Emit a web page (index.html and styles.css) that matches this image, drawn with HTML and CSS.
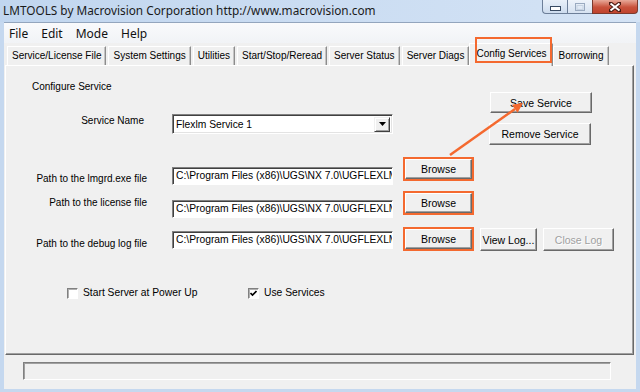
FILE: index.html
```html
<!DOCTYPE html>
<html lang="en">
<head>
    <meta charset="UTF-8">
    <title>LMTOOLS</title>
    <link rel="stylesheet" href="styles.css">
</head>
<body>
    <div class="window">
        <div class="titlebar">
            <span class="title">LMTOOLS by Macrovision Corporation http://www.macrovision.com</span>
            <div class="caption-btns">
                <div class="cap cap-min">
                    <svg width="11" height="5" viewBox="0 0 11 5"><rect x="0.5" y="0.5" width="10" height="4" fill="#fff" stroke="#394b63"/></svg>
                </div>
                <div class="cap cap-max">
                    <svg width="10" height="8" viewBox="0 0 10 8"><rect x="0.5" y="0.5" width="9" height="7" fill="none" stroke="#9aaac0"/><rect x="2" y="2.5" width="6" height="4" fill="none" stroke="#c7d3e2"/></svg>
                </div>
                <div class="cap cap-close">
                    <svg width="12" height="10" viewBox="0 0 12 10"><path d="M1 1 L11 9 M11 1 L1 9" stroke="#4a1a12" stroke-width="4" stroke-linecap="square"/><path d="M1.5 1.5 L10.5 8.5 M10.5 1.5 L1.5 8.5" stroke="#fff" stroke-width="2"/></svg>
                </div>
            </div>
        </div>

        <div class="client">
            <div class="menubar">
                <span>File</span>
                <span>Edit</span>
                <span>Mode</span>
                <span>Help</span>
            </div>

            <div class="tabs">
                <div class="tab">Service/License File</div>
                <div class="tab">System Settings</div>
                <div class="tab">Utilities</div>
                <div class="tab">Start/Stop/Reread</div>
                <div class="tab">Server Status</div>
                <div class="tab">Server Diags</div>
                <div class="tab active">Config Services</div>
                <div class="tab">Borrowing</div>
            </div>

            <div class="panel">
                <div class="top">
                    <div class="top-left">
                        <div class="heading">Configure Service</div>
                        <div class="service-row">
                            <div class="label">Service Name</div>
                            <div class="combo">
                                <span>Flexlm Service 1</span>
                                <div class="drop">
                                    <svg width="7" height="4" viewBox="0 0 7 4"><path d="M0 0 H7 L3.5 4 Z" fill="#000"/></svg>
                                </div>
                            </div>
                        </div>
                    </div>
                    <div class="top-right">
                        <div class="btn btn-wide">Save Service</div>
                        <div class="btn btn-wide btn-remove">Remove Service</div>
                    </div>
                </div>

                <div class="prow row1">
                    <div class="plabel">Path to the lmgrd.exe file</div>
                    <div class="field">C:\Program Files (x86)\UGS\NX 7.0\UGFLEXLM</div>
                    <div class="btn browse marked">Browse</div>
                </div>
                <div class="prow row2">
                    <div class="plabel">Path to the license file</div>
                    <div class="field">C:\Program Files (x86)\UGS\NX 7.0\UGFLEXLM</div>
                    <div class="btn browse marked">Browse</div>
                </div>
                <div class="prow row3">
                    <div class="plabel">Path to the debug log file</div>
                    <div class="field">C:\Program Files (x86)\UGS\NX 7.0\UGFLEXLM</div>
                    <div class="btn browse marked">Browse</div>
                    <div class="btn view-log">View Log...</div>
                    <div class="btn close-log disabled">Close Log</div>
                </div>

                <div class="checks">
                    <div class="check-item">
                        <span class="checkbox"></span>
                        <span>Start Server at Power Up</span>
                    </div>
                    <div class="check-item">
                        <span class="checkbox">
                            <svg width="7" height="7" viewBox="0 0 7 7"><path d="M0.5 3 L2.5 5 L6.5 1" fill="none" stroke="#000" stroke-width="1.6"/></svg>
                        </span>
                        <span>Use Services</span>
                    </div>
                </div>
            </div>

            <div class="status"></div>
        </div>

        <svg class="arrow" width="640" height="392" viewBox="0 0 640 392">
            <line x1="450" y1="155" x2="515" y2="109" stroke="#f4692f" stroke-width="2.5"/>
            <polygon points="523,103 517.6,112.8 511.9,104.8" fill="#f4692f"/>
        </svg>
    </div>
</body>
</html>
```

FILE: styles.css
```css
body {
    margin: 0;
    width: 640px;
    height: 392px;
    overflow: hidden;
    background: #c5d8ef;
    font-family: 'Liberation Sans', Arial, sans-serif;
    font-size: 10px;
    color: #000;
}

.window {
    position: relative;
    height: 392px;
    display: flex;
    flex-direction: column;
}

.titlebar {
    height: 22px;
    display: flex;
    justify-content: space-between;
    align-items: flex-start;
    background: linear-gradient(to right, #c1d6ef, #d4e3f5);
}

.title {
    font-family: 'Noto Sans', sans-serif;
    font-size: 11.8px;
    line-height: 20px;
    padding-left: 3px;
    color: #1a1a1a;
}

.caption-btns {
    display: flex;
    margin-right: 2px;
    height: 14px;
}

.cap {
    box-sizing: border-box;
    height: 14px;
    display: flex;
    align-items: center;
    justify-content: center;
    border: 1px solid #6d7f99;
    border-top: none;
}

.cap-min {
    width: 25px;
    border-right: none;
    border-radius: 0 0 0 4px;
    background: linear-gradient(#e9f0f9, #cddcee);
    padding-top: 4px;
}

.cap-max {
    width: 25px;
    border-right: none;
    background: linear-gradient(#eef3fa, #d6e2f1);
}

.cap-close {
    width: 46px;
    border-radius: 0 0 4px 0;
    border-color: #7b3a2e;
    background: linear-gradient(#e8a999, #c9523c 55%, #c0432e);
}

.client {
    flex: 1;
    margin: 0 4px 3px 4px;
    background: #f0f0f0;
    border-top: 1px solid #93a5bd;
    display: flex;
    flex-direction: column;
}

.menubar {
    height: 20px;
    display: flex;
    align-items: center;
    gap: 13px;
    padding-left: 5px;
    background: linear-gradient(#f9fafc, #f1f3f6);
    font-family: 'Noto Sans', sans-serif;
    font-size: 12px;
    color: #111;
}

.tabs {
    height: 22px;
    box-sizing: border-box;
    display: flex;
    align-items: flex-end;
    padding-left: 3px;
}

.tab {
    box-sizing: border-box;
    height: 19px;
    line-height: 17px;
    padding: 0 4px;
    margin-right: 2px;
    white-space: nowrap;
    border-top: 1px solid #fff;
    border-left: 1px solid #fff;
    border-right: 1px solid #8d8d8d;
    box-shadow: inset -1px 0 #c4c4c4;
}

.tab.active {
    position: relative;
    z-index: 1;
    height: 23px;
    line-height: 19px;
    margin: 0 0 -1px -2px;
    padding: 0 6px;
    background: #f0f0f0;
}

.tab.active::after {
    content: "";
    position: absolute;
    left: 5px;
    right: 0;
    top: -7px;
    bottom: 3px;
    border: 2px solid #f4692f;
}

.panel {
    box-sizing: border-box;
    height: 290px;
    margin: 0 2px 0 1px;
    border: 1px solid;
    border-color: #fff #696969 #696969 #fff;
    box-shadow: inset -1px -1px #a0a0a0;
}

.top {
    display: flex;
}

.heading {
    margin: 15px 0 0 26px;
    line-height: 12px;
}

.service-row {
    display: flex;
    margin-top: 21px;
}

.label {
    width: 138px;
    text-align: right;
    line-height: 12px;
    margin-top: 1px;
}

.combo {
    box-sizing: border-box;
    width: 221px;
    height: 20px;
    margin-left: 28px;
    display: flex;
    align-items: center;
    justify-content: space-between;
    background: #fff;
    border: 1px solid;
    border-color: #808080 #fff #fff #808080;
    box-shadow: inset 1px 1px #404040, inset -1px -1px #e3e3e3;
    padding: 2px 2px 2px 3px;
    font-size: 10.3px;
}

.drop {
    box-sizing: border-box;
    width: 16px;
    height: 15px;
    display: flex;
    align-items: center;
    justify-content: center;
    background: #f0f0f0;
    border: 1px solid;
    border-color: #f0f0f0 #404040 #404040 #f0f0f0;
    box-shadow: inset 1px 1px #fff, inset -1px -1px #a0a0a0;
}

.top-right {
    margin: 26px 41px 0 auto;
    display: flex;
    flex-direction: column;
}

.btn {
    box-sizing: border-box;
    height: 20px;
    display: flex;
    align-items: center;
    justify-content: center;
    background: #f0f0f0;
    border: 1px solid;
    border-color: #fff #696969 #696969 #fff;
    box-shadow: inset -1px -1px #a0a0a0;
    white-space: nowrap;
}

.btn-wide {
    width: 102px;
    height: 21px;
    font-size: 10.5px;
}

.btn-remove {
    height: 22px;
    margin-top: 10px;
    margin-left: -1px;
}

.prow {
    display: flex;
    align-items: flex-start;
}

.plabel {
    width: 141px;
    text-align: right;
    line-height: 12px;
}

.field {
    box-sizing: border-box;
    width: 221px;
    height: 18px;
    margin-left: 25px;
    padding: 0 3px;
    line-height: 16px;
    font-size: 10.3px;
    white-space: nowrap;
    overflow: hidden;
    background: #fff;
    border: 1px solid;
    border-color: #808080 #fff #fff #808080;
    box-shadow: inset 1px 1px #404040;
}

.browse {
    width: 67px;
    margin-left: 12px;
    font-size: 10.5px;
}

.marked {
    outline: 2px solid #f4692f;
}

.row1 { margin-top: 14px; }
.row1 .plabel { margin-top: 14px; }
.row1 .field { margin-top: 8px; }

.row2 { margin-top: 8px; }
.row2 .plabel { margin-top: 4px; }
.row2 .field { margin-top: 7px; }

.row3 { margin-top: 10px; }
.row3 .plabel { margin-top: 10px; }
.row3 .field { margin-top: 3px; }
.row3 .browse { margin-top: 1px; }

.view-log {
    width: 57px;
    height: 23px;
    margin-left: 8px;
    font-size: 10.5px;
}

.close-log {
    width: 71px;
    height: 23px;
    margin-left: 6px;
    font-size: 10.5px;
}

.disabled {
    color: #a0a0a0;
    text-shadow: 1px 1px #fff;
}

.checks {
    display: flex;
    margin-top: 36px;
    padding-left: 61px;
}

.check-item {
    display: flex;
    align-items: center;
    gap: 5px;
    width: 181px;
    line-height: 12px;
    font-size: 10.3px;
}

.checkbox {
    box-sizing: border-box;
    width: 11px;
    height: 11px;
    display: flex;
    align-items: center;
    justify-content: center;
    background: #fff;
    border: 1px solid;
    border-color: #808080 #fff #fff #808080;
    box-shadow: inset 1px 1px #b0b0b0;
}

.status {
    box-sizing: border-box;
    width: 588px;
    height: 18px;
    margin: 7px 0 0 19px;
    border: 1px solid;
    border-color: #808080 #fff #fff #808080;
    box-shadow: inset 1px 1px #a0a0a0;
}

.arrow {
    position: absolute;
    left: 0;
    top: 0;
    pointer-events: none;
}
```
